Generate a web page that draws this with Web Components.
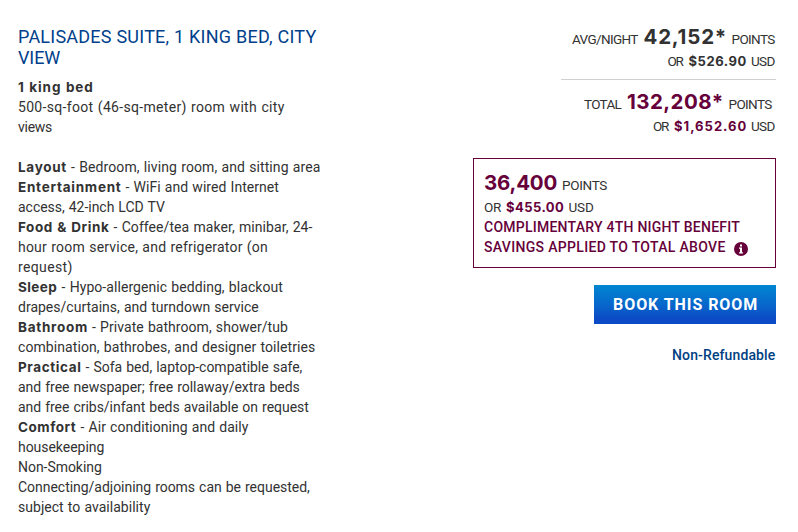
<!DOCTYPE html>
<html lang="en"><head><meta charset="utf-8"><title>Palisades Suite</title>
<style>
body{margin:0;background:#fff;color:#323232;font:14px/20px Roboto,sans-serif}
</style></head><body>
<room-card></room-card>
<script>
/* Inline run of text, tracked so that its glyphs fill the width given by the w attribute. */
class TextRun extends HTMLElement{
  connectedCallback(){
    const r=this.attachShadow({mode:'open'});
    r.innerHTML='<style>:host{display:inline-block;white-space:nowrap}:host([b]){font:700 13.5px/20px Inter,sans-serif}span{white-space:nowrap}</style><span><slot></slot></span>';
    const s=r.querySelector('span'),w=+this.getAttribute('w');
    s.style.letterSpacing=(w-.7-s.getBoundingClientRect().width)/(this.textContent.length-1)+'px';
    this.style.width=w+'px';
  }
}
class RoomDetails extends HTMLElement{
  connectedCallback(){
    this.attachShadow({mode:'open'}).innerHTML=`<style>
:host{display:block;padding:26px 0 0 18px}
h2{margin:0 0 9px;font-size:18px;line-height:21px;font-weight:400;color:#003f8b}
div{height:20px;white-space:nowrap;word-spacing:.6px}.gap{margin-top:20px}
</style>
<h2><text-run w="299">PALISADES SUITE, 1 KING BED, CITY</text-run><br><text-run w="43">VIEW</text-run></h2>
<div><text-run b w="75.5">1 king bed</text-run></div>
<div><text-run w="267">500-sq-foot (46-sq-meter) room with city</text-run></div>
<div><text-run w="35">views</text-run></div>
<div class="gap"><text-run b w="49">Layout</text-run> <text-run w="250">- Bedroom, living room, and sitting area</text-run></div>
<div><text-run b w="103.5">Entertainment</text-run> <text-run w="154">- WiFi and wired Internet</text-run></div>
<div><text-run w="147.5">access, 42-inch LCD TV</text-run></div>
<div><text-run b w="91.5">Food &amp; Drink</text-run> <text-run w="199.5">- Coffee/tea maker, minibar, 24-</text-run></div>
<div><text-run w="250.5">hour room service, and refrigerator (on</text-run></div>
<div><text-run w="55">request)</text-run></div>
<div><text-run b w="39.5">Sleep</text-run> <text-run w="222">- Hypo-allergenic bedding, blackout</text-run></div>
<div><text-run w="241.5">drapes/curtains, and turndown service</text-run></div>
<div><text-run b w="70">Bathroom</text-run> <text-run w="196.5">- Private bathroom, shower/tub</text-run></div>
<div><text-run w="298">combination, bathrobes, and designer toiletries</text-run></div>
<div><text-run b w="63.5">Practical</text-run> <text-run w="217.5">- Sofa bed, laptop-compatible safe,</text-run></div>
<div><text-run w="282.5">and free newspaper; free rollaway/extra beds</text-run></div>
<div><text-run w="291.5">and free cribs/infant beds available on request</text-run></div>
<div><text-run b w="58.5">Comfort</text-run> <text-run w="168.5">- Air conditioning and daily</text-run></div>
<div><text-run w="87">housekeeping</text-run></div>
<div><text-run w="84.5">Non-Smoking</text-run></div>
<div><text-run w="292.5">Connecting/adjoining rooms can be requested,</text-run></div>
<div><text-run w="133">subject to availability</text-run></div>`;
  }
}
class PriceSummary extends HTMLElement{
  connectedCallback(){
    this.attachShadow({mode:'open'}).innerHTML=`<style>
:host{display:block;padding:27px 22px 0 0}
.row{display:flex;justify-content:flex-end;align-items:baseline;gap:4.5px;font-size:13.5px;height:20px;line-height:20px;white-space:nowrap}
.big{font:700 20.5px/20px Inter,sans-serif}.amt{font:700 13px/20px Inter,sans-serif}
.wine{color:#66003a}
.last{margin-top:4px;gap:4px}
.rule{height:1px;background:#d3d0d1;width:215px;margin:8px 0 12px auto}
.total{padding-right:3px}</style>
<div class="row"><text-run w="67">AVG/NIGHT</text-run><text-run class="big" w="83.5">42,152*</text-run><text-run w="44.5">POINTS</text-run></div>
<div class="row last"><text-run w="17">OR</text-run><text-run class="amt" w="58.5">$526.90</text-run><text-run w="25">USD</text-run></div>
<div class="rule"></div>
<div class="row total"><text-run w="38.5">TOTAL</text-run><text-run class="big wine" w="97">132,208*</text-run><text-run w="44.5">POINTS</text-run></div>
<div class="row last"><text-run w="17">OR</text-run><text-run class="amt wine" w="73">$1,652.60</text-run><text-run w="25">USD</text-run></div>`;
  }
}
class BenefitBox extends HTMLElement{
  connectedCallback(){
    this.attachShadow({mode:'open'}).innerHTML=`<style>
:host{display:block;box-sizing:border-box;width:303px;height:110px;margin:22px 22px 0 auto;border:1px solid #66003a;padding:14px 0 0 10px}
.row{display:flex;align-items:baseline;gap:4px;font-size:13.5px;height:20px;line-height:20px;white-space:nowrap}
.big{font:700 20.5px/20px Inter,sans-serif}.amt{font:700 13px/20px Inter,sans-serif}
.wine{color:#66003a}.next{margin-top:4px}
.note{font-size:14px;font-weight:500;color:#66003a}
svg{align-self:center;margin:3px 0 0 4px}</style>
<div class="row"><text-run class="big wine" w="74">36,400</text-run><text-run w="46">POINTS</text-run></div>
<div class="row next"><text-run w="18">OR</text-run><text-run class="amt wine" w="58.5">$455.00</text-run><text-run w="26">USD</text-run></div>
<div class="row note"><text-run w="256.5">COMPLIMENTARY 4TH NIGHT BENEFIT</text-run></div>
<div class="row note"><text-run w="242">SAVINGS APPLIED TO TOTAL ABOVE</text-run><svg width="14" height="14" viewBox="0 0 14 14"><circle cx="7" cy="7" r="7" fill="#66003a"/><path d="M6 2.5h2v2H6zM5 5.5h3v4.7h1v1.2H5v-1.2h1V6.7H5z" fill="#fff"/></svg></div>`;
  }
}
class BookAction extends HTMLElement{
  connectedCallback(){
    this.attachShadow({mode:'open'}).innerHTML=`<style>
:host{display:flex;flex-direction:column;align-items:flex-end;padding:17px 22px 0 0}
button{border:0;margin:0;width:182px;height:39px;padding:0 0 0 1px;color:#fff;font:700 16px/38px Roboto,sans-serif;background:linear-gradient(#0086d1,#0864cb 55%,#0b4bc5 85%)}
a{margin-top:21px;font-weight:500;color:#003f82}</style>
<button><text-run w="145">BOOK THIS ROOM</text-run></button><a><text-run w="104">Non-Refundable</text-run></a>`;
  }
}
class RoomCard extends HTMLElement{
  connectedCallback(){
    this.attachShadow({mode:'open'}).innerHTML=`<style>:host{display:grid;grid-template-columns:440px 358px;height:532px;overflow:hidden}</style>
<room-details></room-details><section><price-summary></price-summary><benefit-box></benefit-box><book-action></book-action></section>`;
  }
}
customElements.define('text-run',TextRun);
customElements.define('room-details',RoomDetails);
customElements.define('price-summary',PriceSummary);
customElements.define('benefit-box',BenefitBox);
customElements.define('book-action',BookAction);
customElements.define('room-card',RoomCard);
</script></body></html>
